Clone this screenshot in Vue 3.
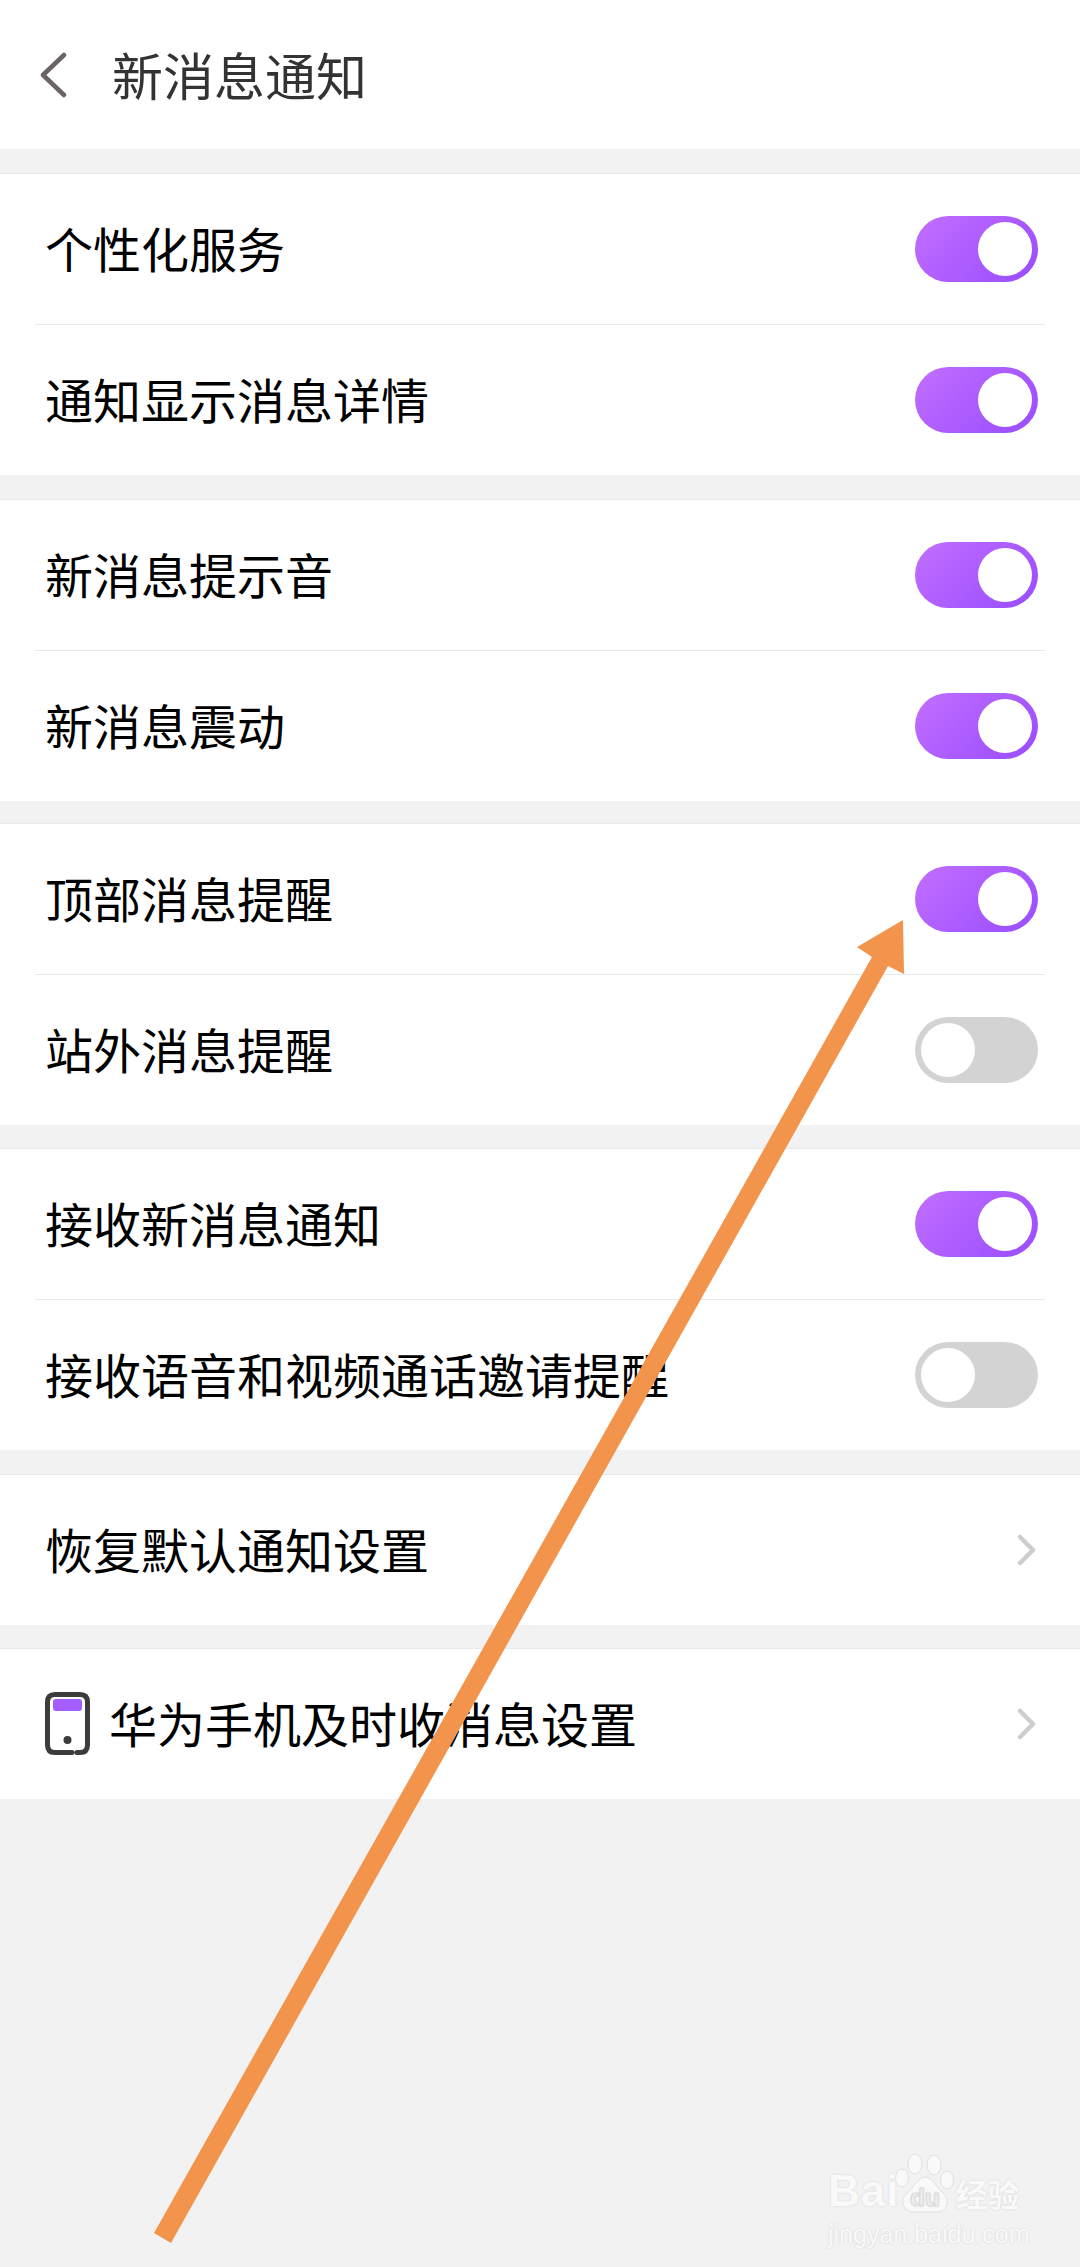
<script setup>
// Settings groups, in screen order
const groups = [
  [
    { label: '个性化服务', on: true },
    { label: '通知显示消息详情', on: true }
  ],
  [
    { label: '新消息提示音', on: true },
    { label: '新消息震动', on: true }
  ],
  [
    { label: '顶部消息提醒', on: true },
    { label: '站外消息提醒', on: false }
  ],
  [
    { label: '接收新消息通知', on: true },
    { label: '接收语音和视频通话邀请提醒', on: false }
  ],
  [{ label: '恢复默认通知设置', link: true }],
  [{ label: '华为手机及时收消息设置', link: true, phone: true }]
];
</script>

<template>
  <div class="page">
    <header class="header">
      <svg class="back" viewBox="0 0 28 46" width="28" height="46">
        <path d="M25 3 L4 23 L25 43" fill="none" stroke="#6a6464" stroke-width="4.5" stroke-linecap="round" stroke-linejoin="round" />
      </svg>
      <h1 class="title">新消息通知</h1>
    </header>

    <section v-for="(group, i) in groups" :key="i" class="group">
      <div v-for="row in group" :key="row.label" class="row">
        <svg v-if="row.phone" class="phone" viewBox="0 0 45 63" width="45" height="63">
          <path d="M27 60.500 H10 Q2.500 60.500 2.500 53 V10 Q2.500 2.500 10 2.500 H35 Q42.500 2.500 42.500 10 V53 Q42.500 60.500 35 60.500 H32" fill="none" stroke="#3c3c3c" stroke-width="5" stroke-linecap="round" />
          <rect x="8" y="7" width="29" height="12" rx="3" fill="#a45eff" />
          <circle cx="22.500" cy="48" r="4" fill="#3c3c3c" />
        </svg>
        <span class="label">{{ row.label }}</span>
        <svg v-if="row.link" class="chevron" viewBox="0 0 19 32" width="19" height="32">
          <path d="M3 3 L16 16 L3 29" fill="none" stroke="#cdcdcd" stroke-width="4.500" stroke-linecap="round" stroke-linejoin="round" />
        </svg>
        <div v-else class="toggle" :class="{ on: row.on }">
          <span class="knob"></span>
        </div>
      </div>
    </section>

    <div class="watermark">
      <div class="mark-top">
        <span class="mark-bai">Bai</span>
        <svg class="paw" viewBox="0 0 60 66" width="60" height="66">
          <g fill="#f9f9f9" stroke="#e0e0e0" stroke-width="1">
            <ellipse cx="20" cy="14" rx="7" ry="10" />
            <ellipse cx="39" cy="15" rx="7" ry="10" />
            <ellipse cx="7" cy="28" rx="6.500" ry="9" />
            <ellipse cx="52" cy="30" rx="6.500" ry="9" />
            <path d="M30 27 C38 27 40 37 48 43 C56 50 52 62 41 62 H19 C8 62 4 50 12 43 C20 37 22 27 30 27 Z" />
          </g>
          <text x="30" y="56" text-anchor="middle" class="mark-du">du</text>
        </svg>
        <span class="mark-cn">经验</span>
      </div>
      <div class="mark-url">jingyan.baidu.com</div>
    </div>

    <svg class="arrow" viewBox="0 0 1080 2267" width="1080" height="2267">
      <polygon points="903,920 857,947 872,957 154,2233 171,2243 888,966 904,974" fill="#f2944b" />
    </svg>
  </div>
</template>

<style scoped>
.page {
  position: relative;
  width: 1080px;
  height: 2267px;
  overflow: hidden;
  background: #f2f2f2;
  font-family: "Noto Sans CJK SC", "Noto Sans", sans-serif;
}

.header {
  display: flex;
  align-items: center;
  height: 149px;
  padding-left: 39px;
  box-sizing: border-box;
  background: #fff;
}

.back {
  flex-shrink: 0;
  margin-right: 45px;
}

.title {
  margin: 0;
  font-size: 51px;
  font-weight: 400;
  line-height: 1;
  color: #333;
}

.group {
  margin-top: 23px;
  border-top: 1px solid #e8e8e8;
  background: #fff;
}

/* the gaps are not quite even in the screenshot */
.group:nth-of-type(1),
.group:nth-of-type(2),
.group:nth-of-type(5) {
  margin-top: 24px;
}

.group:nth-of-type(3) {
  margin-top: 22px;
}

.row {
  position: relative;
  display: flex;
  align-items: center;
  height: 150px;
  padding: 0 42px 0 45px;
  box-sizing: border-box;
}

.row + .row {
  height: 151px;
  padding-top: 1px;
}

.row + .row::before {
  content: "";
  position: absolute;
  top: 0;
  left: 35px;
  right: 35px;
  height: 1px;
  background: #e8e8e8;
}

.label {
  flex: 1;
  margin-bottom: 4px;
  font-size: 48px;
  line-height: 1;
  color: #000;
}

.phone {
  flex-shrink: 0;
  margin: 0 19px 2px 0;
}

.chevron {
  flex-shrink: 0;
  margin-right: 2px;
}

.toggle {
  display: flex;
  justify-content: flex-start;
  flex-shrink: 0;
  width: 123px;
  height: 66px;
  padding: 6px;
  box-sizing: border-box;
  border-radius: 33px;
  background: #d3d3d3;
}

.toggle.on {
  justify-content: flex-end;
  background: linear-gradient(135deg, #c26eff, #984cff);
}

.knob {
  width: 54px;
  height: 54px;
  border-radius: 50%;
  background: #fff;
}

.watermark {
  position: absolute;
  left: 828px;
  top: 2150px;
  width: 200px;
  color: #f9f9f9;
  font-family: "Liberation Sans", sans-serif;
  text-shadow: 0 0 2px #cfcfcf;
}

.mark-top {
  display: flex;
  align-items: flex-end;
  height: 66px;
}

.mark-bai {
  font-size: 44px;
  font-weight: 700;
  line-height: 50px;
  letter-spacing: 1px;
}

.paw {
  flex-shrink: 0;
  margin-left: -4px;
}

.mark-du {
  font-family: "Liberation Sans", sans-serif;
  font-size: 24px;
  font-weight: 700;
  fill: #f2f2f2;
  stroke: #d8d8d8;
  stroke-width: 0.6px;
}

.mark-cn {
  font-family: "Noto Sans CJK SC", sans-serif;
  font-size: 32px;
  font-weight: 700;
  line-height: 46px;
}

.mark-url {
  margin-top: 3px;
  font-size: 25px;
  line-height: 30px;
  white-space: nowrap;
}

.arrow {
  position: absolute;
  top: 0;
  left: 0;
  pointer-events: none;
}
</style>

<style>
html,
body {
  background: #f2f2f2;
}
</style>
